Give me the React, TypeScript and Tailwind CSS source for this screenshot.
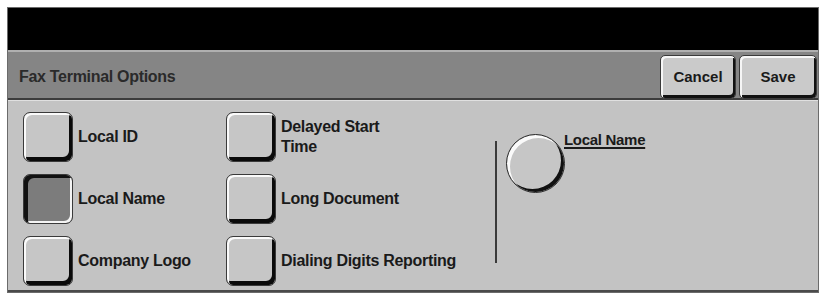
import type { ReactNode } from 'react'

const font = { fontFamily: '"Liberation Sans", Arial, sans-serif' }

function BevelButton({ selected = false }: { selected?: boolean }) {
  return (
    <div
      className={
        'w-[50px] h-[50px] shrink-0 rounded-[7px] border border-[#3a3a3a] ' +
        (selected
          ? 'bg-[#7c7c7c] shadow-[inset_4px_3px_0_#111,inset_-2px_-2px_0_#f4f4f4]'
          : 'bg-[#c6c6c6] shadow-[inset_2px_2px_0_#fafafa,inset_-3px_-4px_0_#0a0a0a]')
      }
    />
  )
}

function Option({ label, selected }: { label: ReactNode; selected?: boolean }) {
  return (
    <div className="flex items-center gap-[5px] h-[50px]">
      <BevelButton selected={selected} />
      <span className="text-[16px] font-bold leading-[20px] text-[#1a1a1a] tracking-[-0.3px]">{label}</span>
    </div>
  )
}

function HeaderButton({ children, width }: { children: ReactNode; width: string }) {
  return (
    <button
      className={
        width +
        ' h-[44px] rounded-[5px] border border-[#3a3a3a] bg-[#cacaca] text-[15px] font-bold text-[#1a1a1a] shadow-[inset_2px_2px_0_#f6f6f6,inset_-2px_-3px_0_#111]'
      }
    >
      {children}
    </button>
  )
}

export default function App() {
  return (
    <div className="w-[823px] h-[298px] bg-white pt-[7px] pl-[7px]" style={font}>
      <div className="w-[812px] border border-[#6b6b6b]">
        <div className="h-[42px] bg-black" />
        <div className="h-[2px] bg-[#b0b0b0]" />
        <div className="h-[48px] bg-[#858585] flex items-center justify-between pl-[11px] pr-[1px] border-b-2 border-[#3c3c3c]">
          <span className="text-[16px] font-bold text-[#2a2a2a] tracking-[-0.3px] mt-[3px]">Fax Terminal Options</span>
          <div className="flex gap-[3px] self-start mt-[3px]">
            <HeaderButton width="w-[76px]">Cancel</HeaderButton>
            <HeaderButton width="w-[78px]">Save</HeaderButton>
          </div>
        </div>
        <div className="h-[1px] bg-[#e0e0e0]" />
        <div className="h-[191px] bg-[#c3c3c3] flex pl-[15px] pt-[11px] border-b-2 border-[#4a4a4a]">
          <div className="w-[203px] flex flex-col gap-[12px]">
            <Option label="Local ID" />
            <Option label="Local Name" selected />
            <Option label="Company Logo" />
          </div>
          <div className="w-[269px] flex flex-col gap-[12px]">
            <Option
              label={
                <>
                  Delayed Start
                  <br />
                  Time
                </>
              }
            />
            <Option label="Long Document" />
            <Option label="Dialing Digits Reporting" />
          </div>
          <div className="w-[2px] h-[122px] mt-[29px] bg-[#3a3a3a]" />
          <div className="flex items-start pl-[9px] pt-[22px]">
            <div className="w-[59px] h-[59px] rounded-full border border-[#2a2a2a] bg-[#c6c6c6] shadow-[inset_3px_3px_0_#fafafa,inset_-3px_-3px_0_#111]" />
            <span className="-ml-[1px] mt-[-5px] text-[15px] font-bold text-[#1a1a1a] tracking-[-0.3px] underline decoration-2 underline-offset-2">
              Local Name
            </span>
          </div>
        </div>
      </div>
    </div>
  )
}
